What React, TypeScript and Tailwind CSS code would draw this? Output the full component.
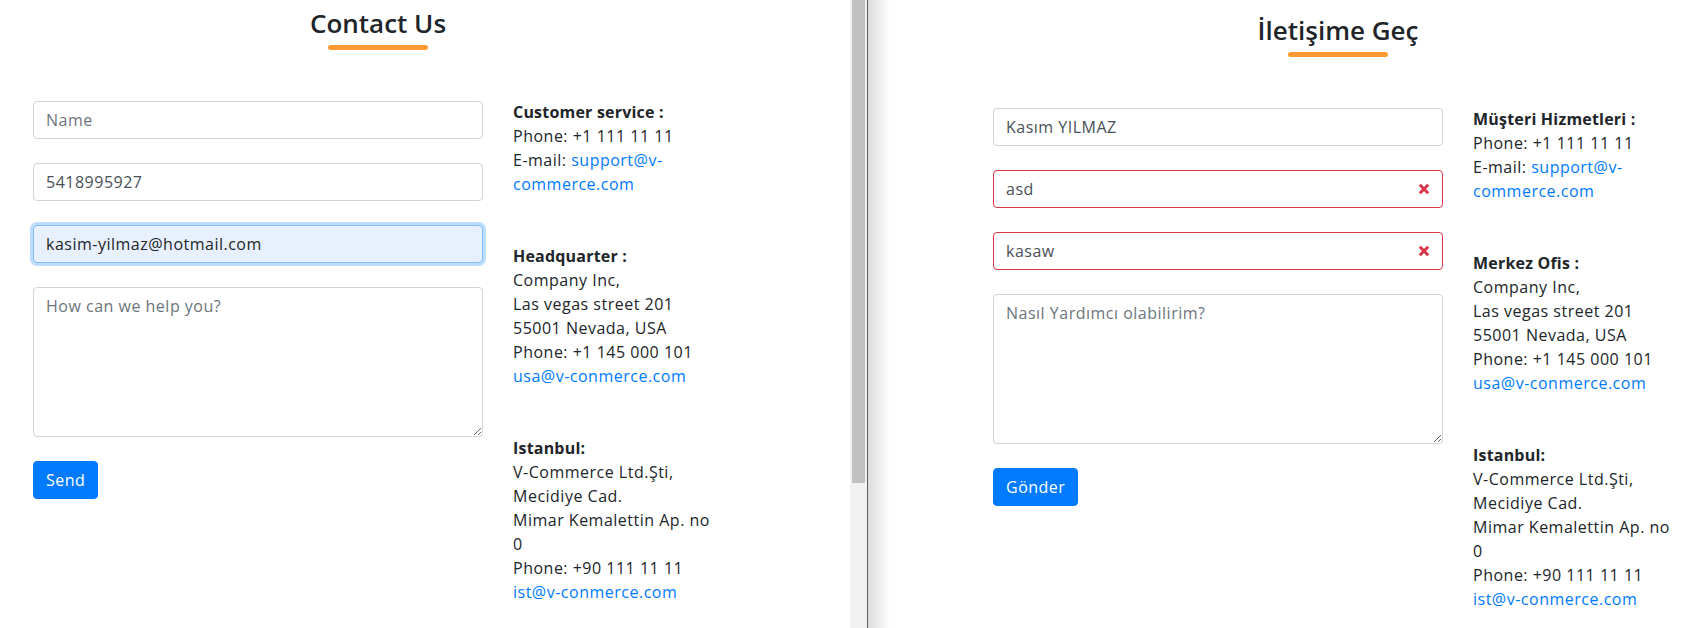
import React from "react";

type FieldState = "normal" | "focused" | "invalid";

interface FieldProps {
  value?: string;
  placeholder?: string;
  state?: FieldState;
}

const Field = ({ value, placeholder, state = "normal" }: FieldProps) => {
  const base =
    "block h-[38px] w-full rounded-[4px] border px-[12px] text-[16px] leading-[24px] tracking-[0.5px] outline-none placeholder:text-[#6c757d]";
  let look = "border-[#ced4da] bg-white text-[#495057]";
  if (state === "focused") look = "border-[#80bdff] bg-[#e8f0fe] text-[#212529] shadow-[0_0_0_3px_rgba(0,123,255,0.25)]";
  if (state === "invalid") look = "border-[#dc3545] bg-white text-[#495057] pr-[36px]";

  return (
    <div className="relative mb-[24px]">
      <input readOnly value={value ?? ""} placeholder={placeholder} className={`${base} ${look}`} />
      {state === "invalid" && (
        <svg
          className="pointer-events-none absolute right-[13px] top-1/2 h-[12px] w-[12px] -translate-y-1/2"
          viewBox="0 0 12 12"
        >
          <path d="M1.8 1.8 L10.2 10.2 M10.2 1.8 L1.8 10.2" stroke="#dc3545" strokeWidth="3" strokeLinecap="butt" />
        </svg>
      )}
    </div>
  );
};

interface InfoBlock {
  title: string;
  lines: string[];
  links?: string[];
  prefixLink?: { text: string; link: string };
}

const Info = ({ blocks }: { blocks: InfoBlock[] }) => (
  <div className="-mt-px text-[16px] leading-[24px] tracking-[0.5px] text-[#212529]">
    {blocks.map((b, i) => (
      <div key={i} className={i < blocks.length - 1 ? "mb-[48px]" : ""}>
        <div className="font-bold whitespace-nowrap tracking-[0.2px]">{b.title}</div>
        {b.lines.map((l) => (
          <div key={l} className="whitespace-nowrap">
            {l}
          </div>
        ))}
        {b.prefixLink && (
          <div className="whitespace-nowrap">
            {b.prefixLink.text}
            <a className="text-[#007bff]">{b.prefixLink.link}</a>
          </div>
        )}
        {b.links?.map((l) => (
          <div key={l} className="whitespace-nowrap">
            <a className="text-[#007bff]">{l}</a>
          </div>
        ))}
      </div>
    ))}
  </div>
);

interface PanelProps {
  title: string;
  fields: FieldProps[];
  message: string;
  button: string;
  serviceTitle: string;
  hqTitle: string;
}

const ContactPanel = ({ title, fields, message, button, serviceTitle, hqTitle }: PanelProps) => {
  const blocks: InfoBlock[] = [
    {
      title: serviceTitle,
      lines: ["Phone: +1 111 11 11"],
      prefixLink: { text: "E-mail: ", link: "support@v-" },
      links: ["commerce.com"],
    },
    {
      title: hqTitle,
      lines: ["Company Inc,", "Las vegas street 201", "55001 Nevada, USA", "Phone: +1 145 000 101"],
      links: ["usa@v-conmerce.com"],
    },
    {
      title: "Istanbul:",
      lines: ["V-Commerce Ltd.Şti,", "Mecidiye Cad.", "Mimar Kemalettin Ap. no", "0", "Phone: +90 111 11 11"],
      links: ["ist@v-conmerce.com"],
    },
  ];

  return (
    <div className="w-[720px] shrink-0">
      {/* Heading */}
      <div className="flex flex-col items-center">
        <h3 className="text-[26px] leading-[32px] font-semibold text-[#212529]">{title}</h3>
        <div className="mt-[6px] h-[5px] w-[100px] rounded-full bg-[#ff9a33]" />
      </div>

      <div className="mt-[51px] flex">
        {/* Form */}
        <div className="w-[480px] shrink-0 px-[15px]">
          {fields.map((f, i) => (
            <Field key={i} {...f} />
          ))}
          <textarea
            readOnly
            placeholder={message}
            className="mb-[24px] block h-[150px] w-full resize-y rounded-[4px] border border-[#ced4da] bg-white px-[12px] py-[6px] text-[16px] leading-[24px] tracking-[0.5px] text-[#495057] outline-none placeholder:text-[#6c757d]"
          />
          <button className="h-[38px] rounded-[4px] border border-[#007bff] bg-[#007bff] px-[12px] text-[16px] leading-[24px] tracking-[0.5px] text-white">
            {button}
          </button>
        </div>

        {/* Addresses */}
        <div className="w-[240px] shrink-0 px-[15px]">
          <Info blocks={blocks} />
        </div>
      </div>
    </div>
  );
};

export default function App() {
  return (
    <div className="flex h-[628px] w-[1695px] overflow-hidden bg-white font-['Open_Sans',sans-serif]">
      {/* English window */}
      <div className="w-[850px] shrink-0 pl-[18px] pt-[7px]">
        <ContactPanel
          title="Contact Us"
          fields={[
            { placeholder: "Name" },
            { value: "5418995927" },
            { value: "kasim-yilmaz@hotmail.com", state: "focused" },
          ]}
          message="How can we help you?"
          button="Send"
          serviceTitle="Customer service :"
          hqTitle="Headquarter :"
        />
      </div>

      {/* scrollbar */}
      <div className="w-[17px] shrink-0 bg-[#f1f1f1] px-[2px]">
        <div className="h-[483px] w-full bg-[#c1c1c1]" />
      </div>
      <div className="w-px shrink-0 bg-[#5c5c5c]" />

      {/* Turkish window */}
      <div className="relative min-w-0 flex-1 overflow-hidden pl-[110px] pt-[14px]">
        <div className="pointer-events-none absolute inset-y-0 left-0 w-[22px] bg-gradient-to-r from-[#dcdcdc] to-white/0" />
        <ContactPanel
          title="İletişime Geç"
          fields={[
            { value: "Kasım YILMAZ" },
            { value: "asd", state: "invalid" },
            { value: "kasaw", state: "invalid" },
          ]}
          message="Nasıl Yardımcı olabilirim?"
          button="Gönder"
          serviceTitle="Müşteri Hizmetleri :"
          hqTitle="Merkez Ofis :"
        />
      </div>
    </div>
  );
}
